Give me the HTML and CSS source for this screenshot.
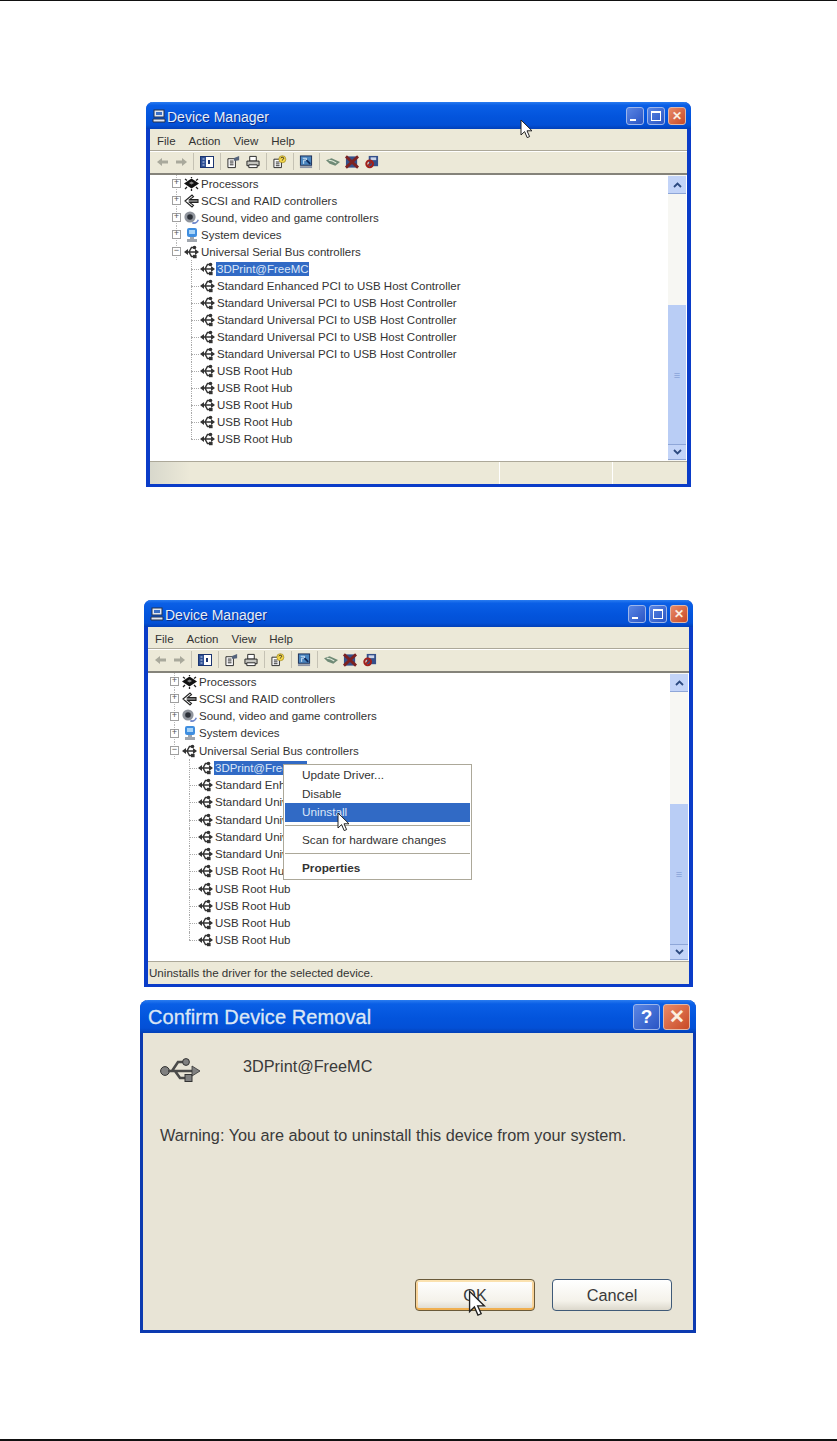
FILE: index.html

```html
<!DOCTYPE html>
<html lang="en">
<head>
  <meta charset="UTF-8" />
  <title>Device Manager</title>
  <link rel="stylesheet" href="styles.css">
</head>
<body>

<svg class="defs" width="0" height="0">
  <symbol id="usb" viewBox="0 0 15 14">
    <path d="M2 7H12M5 7L7.5 2.5H10M5 7L7.5 11.5H10" fill="none" stroke="#333" stroke-width="1.5"/>
    <path d="M0 7L4 4V10ZM15 7L11 4V10Z" fill="#333"/>
    <circle cx="10.5" cy="2.5" r="1.8" fill="#333"/>
    <rect x="9" y="9.8" width="3.6" height="3.4" fill="#333"/>
  </symbol>
  <symbol id="scsi" viewBox="0 0 15 14">
    <path d="M1 7L8 1L9.5 2.6L5.5 5.6H14V8.4H5.5L9.5 11.4L8 13Z" fill="#fff" stroke="#222" stroke-width="1.1"/>
    <path d="M5 7H14" stroke="#222"/>
  </symbol>
  <symbol id="chip" viewBox="0 0 15 14">
    <path d="M7.5 1.5L15 6.5L7.5 11.5L0 6.5Z" fill="#111"/>
    <path d="M3 3.5L1 2M7.5 1V0M12 3.5L14 2M3 10L1 12M7.5 12V14M12 10L14 12" stroke="#222" stroke-width="1.3"/>
    <path d="M5 6L7.5 4.5L10 6L7.5 7.5Z" fill="#888"/>
  </symbol>
  <symbol id="speaker" viewBox="0 0 15 14">
    <circle cx="6" cy="6" r="5.6" fill="#8f949c"/>
    <circle cx="6" cy="6" r="2.8" fill="#2c3038"/>
    <path d="M8 12.5C11 14 14 12 15 9L13.6 8.4C12.6 11 11 11.4 8.6 11Z" fill="#7088cc"/>
  </symbol>
  <symbol id="system" viewBox="0 0 15 14">
    <rect x="3" y="0" width="10" height="9" rx="2" fill="#3f8ee0"/>
    <rect x="5" y="2" width="6" height="4" fill="#a8d4f8"/>
    <path d="M6 9H10V11H13V14H3V11H6Z" fill="#a0a6ae"/>
  </symbol>
  <symbol id="computer" viewBox="0 0 14 14">
    <rect x="2" y="1" width="10" height="7" fill="#dfe6f2" stroke="#26324a"/>
    <rect x="4" y="3" width="6" height="3" fill="#3a6fc4"/>
    <path d="M1 10H13V13H1Z" fill="#dfe6f2" stroke="#26324a"/>
  </symbol>
  <symbol id="arrow-left" viewBox="0 0 11 10">
    <path d="M0 5L5 1V3.5H11V6.5H5V9Z" fill="#a9a99c"/>
  </symbol>
  <symbol id="arrow-right" viewBox="0 0 11 10">
    <path d="M11 5L6 1V3.5H0V6.5H6V9Z" fill="#a9a99c"/>
  </symbol>
  <symbol id="tb-tree" viewBox="0 0 14 14">
    <rect x="0.5" y="1.5" width="13" height="11" fill="#fff" stroke="#1c3570"/>
    <rect x="1" y="2" width="5" height="10" fill="#2d4f94"/>
    <path d="M2.5 4H4.5M2.5 7H4.5M2.5 10H4.5" stroke="#cdd8ee"/>
    <rect x="8" y="5" width="2" height="4" fill="#1c3570"/>
  </symbol>
  <symbol id="tb-props" viewBox="0 0 15 14">
    <path d="M1 3.5H9V13H1Z" fill="#fff" stroke="#222"/>
    <path d="M3 6H7M3 8H7M3 10H7" stroke="#222"/>
    <path d="M7 3L13 0.5V5L8 6Z" fill="#56647c"/>
  </symbol>
  <symbol id="tb-print" viewBox="0 0 15 14">
    <path d="M4 1H11V6H4Z" fill="#fff" stroke="#222"/>
    <path d="M1 6H14V11H1Z" fill="#c6c6c0" stroke="#222"/>
    <path d="M3 10H12V13H3Z" fill="#fff" stroke="#222"/>
  </symbol>
  <symbol id="tb-help" viewBox="0 0 15 14">
    <path d="M1 4H9V13H1Z" fill="#fff" stroke="#222"/>
    <path d="M3 7H7M3 9H7M3 11H7" stroke="#222"/>
    <circle cx="10" cy="4" r="3.8" fill="#f5d74a" stroke="#8a7410" stroke-width="0.6"/>
    <path d="M8.5 3C8.5 1.5 11.5 1.5 11.5 3C11.5 4 10 4 10 5.4" fill="none" stroke="#222"/>
  </symbol>
  <symbol id="tb-scan" viewBox="0 0 15 14">
    <rect x="1.5" y="0.5" width="12" height="10" fill="#4a86c0" stroke="#1a2c55"/>
    <path d="M4 3H8V5H5V9" fill="none" stroke="#dbe8f6"/>
    <path d="M1 11.5H14V13.5H1Z" fill="#8b93a6"/>
    <path d="M8 5L12 9" stroke="#0f2a5c" stroke-width="2"/>
  </symbol>
  <symbol id="tb-card" viewBox="0 0 15 14">
    <path d="M0 5L6 3L15 7L10 11L4 9Z" fill="#6f8a76"/>
    <path d="M3 5L7 6L11 8" stroke="#dfe8d8" stroke-width="1.2" fill="none"/>
  </symbol>
  <symbol id="tb-remove" viewBox="0 0 15 14">
    <rect x="1" y="1" width="12" height="12" fill="#35508a"/>
    <path d="M1 1L14 13M14 1L1 13" stroke="#7c2222" stroke-width="3"/>
  </symbol>
  <symbol id="tb-disable" viewBox="0 0 15 14">
    <rect x="4" y="0.5" width="10" height="11" fill="#35508a"/>
    <rect x="6" y="2" width="6" height="3" fill="#c9d4ea"/>
    <circle cx="5" cy="9" r="3.6" fill="none" stroke="#a0201c" stroke-width="2.2"/>
    <path d="M2.5 11.5L7.5 6.5" stroke="#a0201c" stroke-width="1.6"/>
  </symbol>
  <symbol id="chev-up" viewBox="0 0 9 6">
    <path d="M1 5L4.5 1.5L8 5" fill="none" stroke="#2c4a80" stroke-width="1.8"/>
  </symbol>
  <symbol id="chev-down" viewBox="0 0 9 6">
    <path d="M1 1L4.5 4.5L8 1" fill="none" stroke="#2c4a80" stroke-width="1.8"/>
  </symbol>
  <symbol id="pointer" viewBox="0 0 13 20">
    <path d="M1 1V16L4.6 12.6L7.2 18.6L9.6 17.6L7 11.8H12Z" fill="#fff" stroke="#222" stroke-width="1"/>
  </symbol>
</svg>

<div class="page">
  <div class="rule-top"></div>

  <div class="window first">
    <div class="titlebar">
      <svg class="title-icon"><use href="#computer"/></svg>
      <span class="title">Device Manager</span>
      <div class="controls">
        <span class="ctl ctl-min"></span>
        <span class="ctl ctl-max"></span>
        <span class="ctl ctl-close">&#10005;</span>
      </div>
    </div>
    <div class="menubar"><span>File</span><span>Action</span><span>View</span><span>Help</span></div>
    <div class="toolbar">
      <svg class="tb-arrow"><use href="#arrow-left"/></svg>
      <svg class="tb-arrow"><use href="#arrow-right"/></svg>
      <i class="sep"></i>
      <svg class="tb"><use href="#tb-tree"/></svg>
      <i class="sep"></i>
      <svg class="tb"><use href="#tb-props"/></svg>
      <svg class="tb tight"><use href="#tb-print"/></svg>
      <i class="sep"></i>
      <svg class="tb"><use href="#tb-help"/></svg>
      <i class="sep"></i>
      <svg class="tb tight"><use href="#tb-scan"/></svg>
      <i class="sep"></i>
      <svg class="tb"><use href="#tb-card"/></svg>
      <svg class="tb tight"><use href="#tb-remove"/></svg>
      <svg class="tb"><use href="#tb-disable"/></svg>
    </div>
    <div class="content">
      <div class="tree">
        <div class="row"><i class="exp">+</i><svg class="ico"><use href="#chip"/></svg><span>Processors</span></div>
        <div class="row"><i class="exp">+</i><svg class="ico"><use href="#scsi"/></svg><span>SCSI and RAID controllers</span></div>
        <div class="row"><i class="exp">+</i><svg class="ico"><use href="#speaker"/></svg><span>Sound, video and game controllers</span></div>
        <div class="row"><i class="exp">+</i><svg class="ico"><use href="#system"/></svg><span>System devices</span></div>
        <div class="row"><i class="exp">&minus;</i><svg class="ico"><use href="#usb"/></svg><span>Universal Serial Bus controllers</span></div>
        <div class="children">
          <div class="row"><svg class="ico"><use href="#usb"/></svg><span class="selected">3DPrint@FreeMC</span></div>
          <div class="row"><svg class="ico"><use href="#usb"/></svg><span>Standard Enhanced PCI to USB Host Controller</span></div>
          <div class="row"><svg class="ico"><use href="#usb"/></svg><span>Standard Universal PCI to USB Host Controller</span></div>
          <div class="row"><svg class="ico"><use href="#usb"/></svg><span>Standard Universal PCI to USB Host Controller</span></div>
          <div class="row"><svg class="ico"><use href="#usb"/></svg><span>Standard Universal PCI to USB Host Controller</span></div>
          <div class="row"><svg class="ico"><use href="#usb"/></svg><span>Standard Universal PCI to USB Host Controller</span></div>
          <div class="row"><svg class="ico"><use href="#usb"/></svg><span>USB Root Hub</span></div>
          <div class="row"><svg class="ico"><use href="#usb"/></svg><span>USB Root Hub</span></div>
          <div class="row"><svg class="ico"><use href="#usb"/></svg><span>USB Root Hub</span></div>
          <div class="row"><svg class="ico"><use href="#usb"/></svg><span>USB Root Hub</span></div>
          <div class="row"><svg class="ico"><use href="#usb"/></svg><span>USB Root Hub</span></div>
        </div>
      </div>
      <div class="scrollbar">
        <div class="sb-btn"><svg class="chev"><use href="#chev-up"/></svg></div>
        <div class="sb-track"></div>
        <div class="sb-thumb">&#8801;</div>
        <div class="sb-btn"><svg class="chev"><use href="#chev-down"/></svg></div>
      </div>
    </div>
    <div class="statusbar">
      <div class="st st-main"></div><div class="st st-mid"></div><div class="st st-end"></div>
    </div>
    <svg class="pointer pointer-title"><use href="#pointer"/></svg>
  </div>

  <div class="window second">
    <div class="titlebar">
      <svg class="title-icon"><use href="#computer"/></svg>
      <span class="title">Device Manager</span>
      <div class="controls">
        <span class="ctl ctl-min"></span>
        <span class="ctl ctl-max"></span>
        <span class="ctl ctl-close">&#10005;</span>
      </div>
    </div>
    <div class="menubar"><span>File</span><span>Action</span><span>View</span><span>Help</span></div>
    <div class="toolbar">
      <svg class="tb-arrow"><use href="#arrow-left"/></svg>
      <svg class="tb-arrow"><use href="#arrow-right"/></svg>
      <i class="sep"></i>
      <svg class="tb"><use href="#tb-tree"/></svg>
      <i class="sep"></i>
      <svg class="tb"><use href="#tb-props"/></svg>
      <svg class="tb tight"><use href="#tb-print"/></svg>
      <i class="sep"></i>
      <svg class="tb"><use href="#tb-help"/></svg>
      <i class="sep"></i>
      <svg class="tb tight"><use href="#tb-scan"/></svg>
      <i class="sep"></i>
      <svg class="tb"><use href="#tb-card"/></svg>
      <svg class="tb tight"><use href="#tb-remove"/></svg>
      <svg class="tb"><use href="#tb-disable"/></svg>
    </div>
    <div class="content">
      <div class="tree">
        <div class="row"><i class="exp">+</i><svg class="ico"><use href="#chip"/></svg><span>Processors</span></div>
        <div class="row"><i class="exp">+</i><svg class="ico"><use href="#scsi"/></svg><span>SCSI and RAID controllers</span></div>
        <div class="row"><i class="exp">+</i><svg class="ico"><use href="#speaker"/></svg><span>Sound, video and game controllers</span></div>
        <div class="row"><i class="exp">+</i><svg class="ico"><use href="#system"/></svg><span>System devices</span></div>
        <div class="row"><i class="exp">&minus;</i><svg class="ico"><use href="#usb"/></svg><span>Universal Serial Bus controllers</span></div>
        <div class="children">
          <div class="row"><svg class="ico"><use href="#usb"/></svg><span class="selected">3DPrint@FreeMC</span></div>
          <div class="row"><svg class="ico"><use href="#usb"/></svg><span>Standard Enhanced PCI to USB Host Controller</span></div>
          <div class="row"><svg class="ico"><use href="#usb"/></svg><span>Standard Universal PCI to USB Host Controller</span></div>
          <div class="row"><svg class="ico"><use href="#usb"/></svg><span>Standard Universal PCI to USB Host Controller</span></div>
          <div class="row"><svg class="ico"><use href="#usb"/></svg><span>Standard Universal PCI to USB Host Controller</span></div>
          <div class="row"><svg class="ico"><use href="#usb"/></svg><span>Standard Universal PCI to USB Host Controller</span></div>
          <div class="row"><svg class="ico"><use href="#usb"/></svg><span>USB Root Hub</span></div>
          <div class="row"><svg class="ico"><use href="#usb"/></svg><span>USB Root Hub</span></div>
          <div class="row"><svg class="ico"><use href="#usb"/></svg><span>USB Root Hub</span></div>
          <div class="row"><svg class="ico"><use href="#usb"/></svg><span>USB Root Hub</span></div>
          <div class="row"><svg class="ico"><use href="#usb"/></svg><span>USB Root Hub</span></div>
        </div>
      </div>
      <div class="scrollbar">
        <div class="sb-btn"><svg class="chev"><use href="#chev-up"/></svg></div>
        <div class="sb-track"></div>
        <div class="sb-thumb">&#8801;</div>
        <div class="sb-btn"><svg class="chev"><use href="#chev-down"/></svg></div>
      </div>
    </div>
    <div class="statusbar">
      <div class="st st-text">Uninstalls the driver for the selected device.</div>
    </div>

    <div class="menu">
      <div class="menu-item">Update Driver...</div>
      <div class="menu-item">Disable</div>
      <div class="menu-item active">Uninstall</div>
      <div class="menu-sep"></div>
      <div class="menu-item">Scan for hardware changes</div>
      <div class="menu-sep"></div>
      <div class="menu-item bold">Properties</div>
    </div>
    <svg class="pointer pointer-menu"><use href="#pointer"/></svg>
  </div>

  <div class="dialog">
    <div class="dialog-title">
      <span>Confirm Device Removal</span>
      <div class="dialog-controls">
        <span class="ctl ctl-help">?</span>
        <span class="ctl ctl-close">&#10005;</span>
      </div>
    </div>
    <div class="dialog-body">
      <div class="device">
        <svg class="device-icon" viewBox="0 0 40 26">
          <circle cx="5" cy="14" r="4.4" fill="#808080" stroke="#333"/>
          <path d="M8 14H34M12 14L18 5H24M15 14L20 21H26" fill="none" stroke="#4a4a4a" stroke-width="2.6"/>
          <circle cx="26" cy="5" r="3.4" fill="#808080" stroke="#333"/>
          <rect x="25" y="17.5" width="7" height="7" fill="#808080" stroke="#333"/>
          <path d="M32 9L40 14L32 19Z" fill="#808080" stroke="#333" stroke-width="0.8"/>
        </svg>
        <span class="device-name">3DPrint@FreeMC</span>
      </div>
      <p class="warning">Warning: You are about to uninstall this device from your system.</p>
      <div class="buttons">
        <button class="btn btn-default">OK</button>
        <button class="btn">Cancel</button>
      </div>
    </div>
    <svg class="pointer pointer-ok"><use href="#pointer"/></svg>
  </div>

  <div class="rule-bottom"></div>
</div>

</body>
</html>
```

FILE: styles.css

```css
body {
  margin: 0;
  background: #fff;
  font-family: "Liberation Sans", Arial, sans-serif;
  color: #333;
}
.defs {
  position: absolute;
}
.page {
  height: 1441px;
  display: flex;
  flex-direction: column;
  align-items: center;
  overflow: hidden;
}
.rule-top {
  align-self: stretch;
  height: 1px;
  background: #111;
}
.rule-bottom {
  align-self: stretch;
  height: 2px;
  margin-top: auto;
  background: #111;
}

/* device manager windows */
.window {
  position: relative;
  display: flex;
  flex-direction: column;
  box-sizing: border-box;
  border: solid #0a3cc8;
  border-width: 0 4px 3px 4px;
  border-radius: 7px 7px 0 0;
  background: #ece9d8;
  font-size: 11.5px;
}
.first {
  width: 545px;
  height: 385px;
  margin-top: 101px;
}
.second {
  width: 549px;
  height: 387px;
  margin-top: 113px;
}
.titlebar {
  display: flex;
  align-items: center;
  height: 27px;
  margin: 0 -4px;
  padding: 0 5px 0 6px;
  flex: none;
  border-radius: 7px 7px 0 0;
  background: linear-gradient(#2a7cf0 0, #0a5fe6 12%, #0354dc 55%, #0350d6 85%, #0240b8 100%);
}
.title-icon {
  width: 14px;
  height: 14px;
  margin-right: 1px;
}
.title {
  padding-top: 2px;
  color: #e6eefa;
  font-size: 14px;
  text-shadow: 1px 1px #0a2f8c;
}
.controls {
  display: flex;
  gap: 3px;
  margin-left: auto;
}
.ctl {
  position: relative;
  display: block;
  box-sizing: border-box;
  width: 18px;
  height: 18px;
  border: 1px solid #9db6ea;
  border-radius: 3px;
  background: linear-gradient(135deg, #5a86e4, #2a55c4);
  color: #fff;
  text-align: center;
}
.ctl-min::after {
  content: "";
  position: absolute;
  left: 3px;
  bottom: 3px;
  width: 6px;
  height: 2px;
  background: #fff;
}
.ctl-max::after {
  content: "";
  position: absolute;
  inset: 3px;
  border: 1px solid #fff;
  border-top-width: 2px;
}
.ctl-close {
  border-color: #e0b8a8;
  background: linear-gradient(135deg, #e88a68, #c94a26);
  color: #fbeee0;
  font-size: 12px;
  font-weight: bold;
  line-height: 16px;
}
.menubar {
  display: flex;
  flex: none;
  gap: 13px;
  height: 22px;
  box-sizing: border-box;
  align-items: center;
  padding: 2px 0 0 7px;
  border-bottom: 1px solid #aca899;
}
.toolbar {
  display: flex;
  flex: none;
  align-items: center;
  gap: 6px;
  height: 24px;
  padding: 0 0 2px 7px;
  border-top: 1px solid #fff;
  border-bottom: 2px solid #85837a;
  box-sizing: border-box;
}
.tb {
  width: 14px;
  height: 14px;
}
.tb-arrow {
  width: 11px;
  height: 10px;
}
.tb-arrow:first-child {
  margin-right: 2px;
}
.tb.tight {
  margin-left: -1px;
}
.sep {
  width: 1px;
  height: 17px;
  background: #c5c2b4;
}
.content {
  display: flex;
  flex: 1;
  min-height: 0;
  background: #fff;
  border-bottom: 1px solid #aca899;
}
.tree {
  flex: 1;
  padding-left: 22px;
}
.row {
  position: relative;
  display: flex;
  align-items: center;
  height: 17px;
  white-space: nowrap;
}
.second .row {
  height: 17.25px;
}
.exp {
  position: relative;
  box-sizing: border-box;
  width: 9px;
  height: 9px;
  margin-right: 3px;
  border: 1px solid #a0a0a0;
  color: #555;
  font: normal 9px/7px "Liberation Mono", monospace;
  text-align: center;
}
.exp::before {
  content: "";
  position: absolute;
  left: 3px;
  top: -5px;
  height: 3px;
  border-left: 1px dotted #bbb;
}
.exp::after {
  content: "";
  position: absolute;
  left: 3px;
  bottom: -5px;
  height: 3px;
  border-left: 1px dotted #bbb;
}
.ico {
  flex: none;
  width: 15px;
  height: 14px;
  margin-right: 2px;
}
.children {
  margin-left: 19px;
}
.children .row {
  padding-left: 9px;
}
.children .row::before {
  content: "";
  position: absolute;
  left: 0;
  top: 50%;
  width: 8px;
  border-top: 1px dotted #aaa;
}
.children .row::after {
  content: "";
  position: absolute;
  left: 0;
  top: 0;
  height: 100%;
  border-left: 1px dotted #aaa;
}
.children .row:last-child::after {
  height: 50%;
}
.selected {
  margin-left: -1px;
  padding: 1px 0 1px 1px;
  background: #316ac5;
  color: #dbe6f7;
}

/* scrollbar */
.scrollbar {
  display: flex;
  flex: none;
  flex-direction: column;
  box-sizing: border-box;
  width: 18px;
  padding: 1px 0;
  margin-right: 1px;
  background: #f7f7f3;
}
.sb-btn {
  display: flex;
  align-items: center;
  justify-content: center;
  flex: none;
  box-sizing: border-box;
  height: 18px;
  background: #c3d4f8;
  border-bottom: 1px solid #8ea6d8;
}
.sb-btn:last-child {
  height: 16px;
  border-top: 1px solid #8ea6d8;
}
.chev {
  width: 9px;
  height: 6px;
}
.sb-track {
  height: 111px;
}
.second .sb-track {
  height: 112px;
}
.sb-thumb {
  flex: 1;
  display: flex;
  align-items: center;
  justify-content: center;
  background: #b9cdf5;
  color: #8aa4d8;
  font-size: 11px;
}

/* status bars */
.statusbar {
  display: flex;
  flex: 0 0 22px;
  background: #ece9d8;
}
.st {
  box-sizing: border-box;
  border-right: 1px solid #fff;
}
.st-main {
  width: 350px;
  background: linear-gradient(90deg, #d8d8cc, #ece9d8 40px);
}
.st-mid {
  width: 113px;
}
.st-end {
  flex: 1;
  border-right: 0;
}
.st-text {
  flex: 1;
  padding-left: 1px;
  border: 0;
  font-size: 11.6px;
  line-height: 21px;
}

/* context menu */
.menu {
  position: absolute;
  left: 135px;
  top: 164px;
  box-sizing: border-box;
  width: 189px;
  height: 116px;
  padding: 1px;
  background: #fff;
  border: 1px solid #aca899;
}
.menu-item {
  box-sizing: border-box;
  height: 18.5px;
  padding-left: 17px;
  line-height: 18.5px;
  font-size: 11.8px;
}
.menu-item.active {
  background: #316ac5;
  color: #dbe6f7;
}
.menu-item.bold {
  font-weight: bold;
}
.menu-sep {
  height: 1px;
  margin: 3px 0 5px;
  background: #aca899;
}
.menu-sep + .menu-item + .menu-sep {
  margin-top: 4px;
}

/* pointers lying over the screenshots */
.pointer {
  position: absolute;
  width: 13px;
  height: 20px;
}
.pointer-title {
  left: 370px;
  top: 17px;
}
.pointer-menu {
  left: 189px;
  top: 212px;
}
.pointer-ok {
  left: 325px;
  top: 290px;
  width: 18px;
  height: 27px;
}

/* confirm dialog */
.dialog {
  position: relative;
  display: flex;
  flex-direction: column;
  flex: none;
  box-sizing: border-box;
  width: 556px;
  height: 333px;
  margin: 13px 1px 0 0;
  border: solid #0c3ab0;
  border-width: 0 3px 3px;
  border-radius: 8px 8px 0 0;
  background: #e8e4d6;
  color: #3a3a3a;
}
.dialog-title {
  display: flex;
  align-items: center;
  flex: none;
  height: 33px;
  margin: 0 -3px;
  padding: 0 6px 0 8px;
  border-radius: 8px 8px 0 0;
  background: linear-gradient(#2a7cf0 0, #0a5fe6 12%, #0354dc 55%, #0350d6 85%, #0240b8 100%);
  color: #dbe6f5;
  font-size: 20px;
}
.dialog-title > span {
  padding-top: 2px;
  letter-spacing: 0.1px;
  -webkit-text-stroke: 0.3px #dbe6f5;
}
.dialog-controls {
  display: flex;
  gap: 3px;
  margin-left: auto;
}
.dialog-controls .ctl {
  width: 27px;
  height: 26px;
  font-size: 19px;
  line-height: 24px;
  font-weight: bold;
}
.dialog-body {
  display: flex;
  flex-direction: column;
  flex: 1;
}
.device {
  display: flex;
  align-items: center;
  height: 32px;
  margin: 17px 0 0 17px;
}
.device-icon {
  width: 40px;
  height: 26px;
  margin-top: 8px;
}
.device-name {
  margin-left: 43px;
  font-size: 16.25px;
}
.warning {
  margin: 44px 0 0 17px;
  font-size: 16.25px;
}
.buttons {
  display: flex;
  gap: 17px;
  margin: auto 21px 19px auto;
}
.btn {
  width: 120px;
  height: 32px;
  padding: 0;
  border: 1px solid #3f5a78;
  border-radius: 4px;
  background: linear-gradient(#fff, #f4f2ea 70%, #dcd8cc);
  color: #3a3a3a;
  font: 16.25px "Liberation Sans", Arial, sans-serif;
}
.btn-default {
  border-color: #6a5a3a;
  box-shadow: inset 0 -2px 0 #f0b050, inset 0 2px 0 #fbe2b0, inset 2px 0 0 #f9d49a, inset -2px 0 0 #f9d49a;
}
```
